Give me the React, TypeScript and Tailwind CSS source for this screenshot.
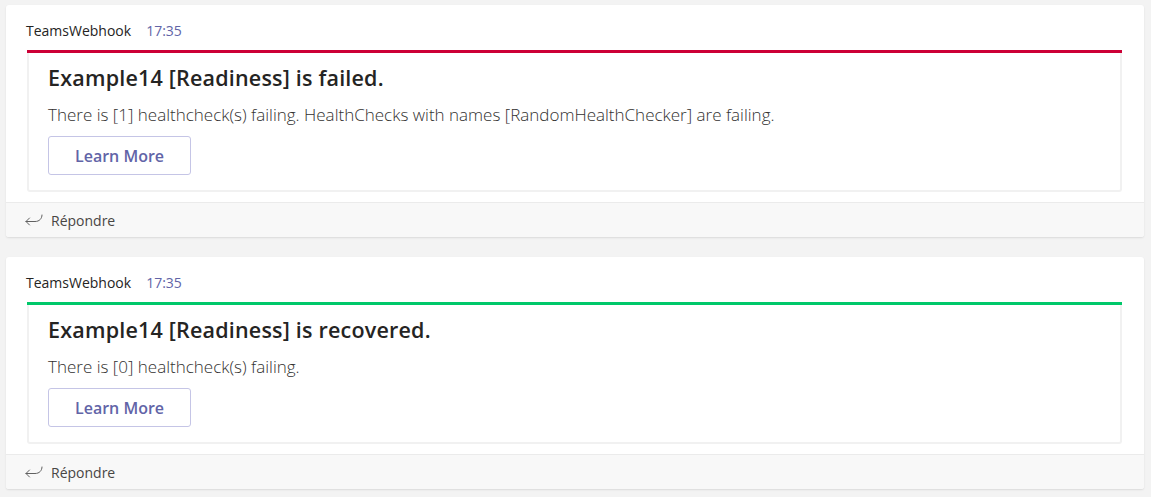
import React from "react";

const font = { fontFamily: '"Open Sans", "Noto Sans", sans-serif' };

function ReplyIcon() {
    return (
        <svg width="20" height="16" viewBox="0 0 20 16" fill="none" stroke="#616161" strokeWidth="1" strokeLinecap="round" strokeLinejoin="round">
            <path d="M18 3c0 3.5-2.5 6.5-7 6.5H2" />
            <path d="M5.5 6L2 9.5l3.5 3.5" />
        </svg>
    );
}

function Message({ title, text, accent }: { title: string; text: string; accent: string }) {
    return (
        <div className="bg-white rounded-[3px] shadow-[0_1px_2px_rgba(0,0,0,0.1)] overflow-hidden">
            <div className="h-[45px] flex items-center pl-[20px] pt-[5px] gap-[15px] text-[14px]">
                <span className="text-[#252423]">TeamsWebhook</span>
                <span className="text-[#6264a7]">17:35</span>
            </div>
            <div className="ml-[21px] mr-[22px] rounded-[3px] border-2 border-t-0 border-[#f1f1f1]">
                <div className={`h-[3px] -mx-[2px] ${accent}`} />
                <div className="px-[19px] pt-[11px] pb-[15px]">
                    <div className="text-[21.5px] font-semibold text-[#252423] leading-[28px] tracking-[0.2px]">{title}</div>
                    <div className="mt-[12px] text-[17px] font-light text-[#323130] leading-[22px]">{text}</div>
                    <button className="mt-[10px] h-[39px] w-[143px] border border-[#c5c5e6] rounded-[3px] text-[#6264a7] text-[16px] font-semibold">
                        Learn More
                    </button>
                </div>
            </div>
            <div className="mt-[10px] h-[35px] bg-[#f8f8f8] border-t border-[#ebebeb] flex items-center pl-[18px] gap-[7px]">
                <ReplyIcon />
                <span className="text-[14px] text-[#484644]">Répondre</span>
            </div>
        </div>
    );
}

export default function App() {
    return (
        <div className="min-h-[497px] bg-[#f3f3f3] pt-[5px] pl-[6px] pr-[7px] flex flex-col gap-[20px]" style={font}>
            <Message
                title="Example14 [Readiness] is failed."
                text="There is [1] healthcheck(s) failing. HealthChecks with names [RandomHealthChecker] are failing."
                accent="bg-[#cc0036]"
            />
            <Message
                title="Example14 [Readiness] is recovered."
                text="There is [0] healthcheck(s) failing."
                accent="bg-[#00c86a]"
            />
        </div>
    );
}
